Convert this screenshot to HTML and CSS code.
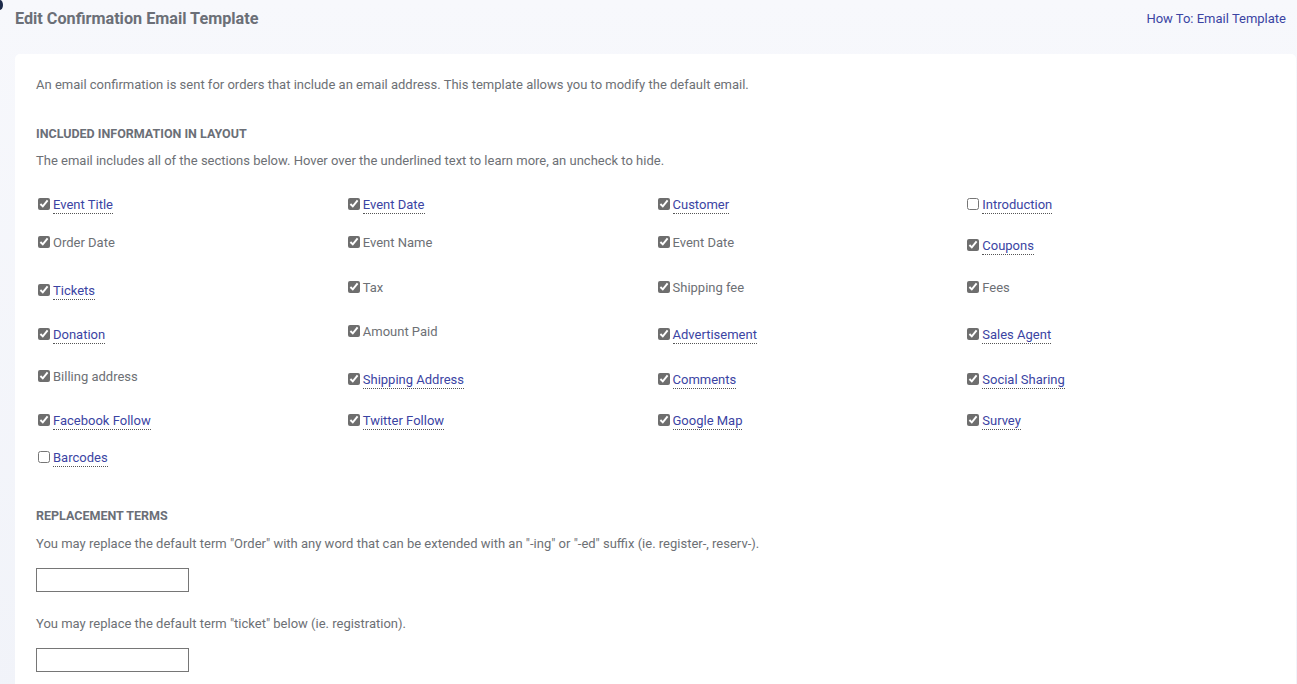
FILE: index.html
```html
<!DOCTYPE html>
<html lang="en">
<head>
    <meta charset="UTF-8">
    <meta name="viewport" content="width=device-width, initial-scale=1.0">
    <title>Edit Confirmation Email Template</title>
    <link rel="stylesheet" href="styles.css">
</head>
<body>
    <span class="corner-dot"></span>

    <div class="page-header">
        <h1>Edit Confirmation Email Template</h1>
        <a class="help-link" href="#">How To: Email Template</a>
    </div>

    <div class="card">
        <p class="intro">An email confirmation is sent for orders that include an email address. This template allows you to modify the default email.</p>

        <h2>Included Information in Layout</h2>
        <p class="note">The email includes all of the sections below. Hover over the underlined text to learn more, an uncheck to hide.</p>

        <div class="sections">
            <label class="item tip"><input type="checkbox" checked><span>Event Title</span></label>
            <label class="item tip"><input type="checkbox" checked><span>Event Date</span></label>
            <label class="item tip"><input type="checkbox" checked><span>Customer</span></label>
            <label class="item tip"><input type="checkbox"><span>Introduction</span></label>

            <label class="item"><input type="checkbox" checked><span>Order Date</span></label>
            <label class="item"><input type="checkbox" checked><span>Event Name</span></label>
            <label class="item"><input type="checkbox" checked><span>Event Date</span></label>
            <label class="item tip"><input type="checkbox" checked><span>Coupons</span></label>

            <label class="item tip"><input type="checkbox" checked><span>Tickets</span></label>
            <label class="item"><input type="checkbox" checked><span>Tax</span></label>
            <label class="item"><input type="checkbox" checked><span>Shipping fee</span></label>
            <label class="item"><input type="checkbox" checked><span>Fees</span></label>

            <label class="item tip"><input type="checkbox" checked><span>Donation</span></label>
            <label class="item"><input type="checkbox" checked><span>Amount Paid</span></label>
            <label class="item tip"><input type="checkbox" checked><span>Advertisement</span></label>
            <label class="item tip"><input type="checkbox" checked><span>Sales Agent</span></label>

            <label class="item"><input type="checkbox" checked><span>Billing address</span></label>
            <label class="item tip"><input type="checkbox" checked><span>Shipping Address</span></label>
            <label class="item tip"><input type="checkbox" checked><span>Comments</span></label>
            <label class="item tip"><input type="checkbox" checked><span>Social Sharing</span></label>

            <label class="item tip"><input type="checkbox" checked><span>Facebook Follow</span></label>
            <label class="item tip"><input type="checkbox" checked><span>Twitter Follow</span></label>
            <label class="item tip"><input type="checkbox" checked><span>Google Map</span></label>
            <label class="item tip"><input type="checkbox" checked><span>Survey</span></label>

            <label class="item tip"><input type="checkbox"><span>Barcodes</span></label>
        </div>

        <h2>Replacement Terms</h2>
        <p class="note terms">You may replace the default term "Order" with any word that can be extended with an "-ing" or "-ed" suffix (ie. register-, reserv-).</p>
        <input class="term-input" type="text">

        <p class="note terms second">You may replace the default term "ticket" below (ie. registration).</p>
        <input class="term-input" type="text">
    </div>
</body>
</html>
```

FILE: styles.css
```css
body {
    margin: 0;
    font-family: Roboto, "Liberation Sans", Arial, sans-serif;
    font-size: 13px;
    color: #6d7075;
    background: linear-gradient(180deg, #f7f8fc 0%, #f1f3f9 100%);
    min-height: 100vh;
}
.corner-dot {
    position: absolute;
    left: -3px;
    top: 0;
    width: 6px;
    height: 10px;
    border-radius: 50%;
    background: #1c2a4a;
}
.page-header {
    display: flex;
    justify-content: space-between;
    align-items: flex-start;
    height: 54px;
    padding: 0 11px 0 15px;
}
.page-header h1 {
    margin: 9px 0 0;
    font-size: 16.2px;
    line-height: 20px;
    font-weight: bold;
    color: #6b6f77;
}
.help-link {
    margin-top: 10px;
    line-height: 18px;
    color: #3b44a3;
    text-decoration: none;
}
.card {
    margin: 0 1px 0 15px;
    padding: 22px 21px 30px;
    background: #fff;
    border-radius: 5px;
    min-height: 600px;
}
.intro {
    margin: 0 0 31px;
    line-height: 18px;
}
h2 {
    margin: 0;
    font-size: 12.5px;
    line-height: 18px;
    font-weight: bold;
    text-transform: uppercase;
    color: #6b6f77;
}
.note {
    margin: 9px 0 0;
    line-height: 18px;
}
.sections {
    display: grid;
    grid-template-columns: repeat(4, 1fr);
    grid-template-rows: 41px 45px 44px 45px 41px 37px 26px;
    align-items: start;
    margin: 23px 0 35px;
}
.item {
    display: flex;
    align-items: center;
    line-height: 18px;
    cursor: pointer;
}
.item input {
    width: 12px;
    height: 12px;
    margin: 0 3px 3px 2px;
    accent-color: #6e6e6e;
}
.item.tip {
    padding-top: 4px;
}
.item.tip span {
    color: #3b44a3;
    line-height: 16px;
    border-bottom: 1px dotted #555;
}
.terms {
    margin-top: 10px;
}
.terms.second {
    margin-top: 23px;
}
.term-input {
    display: block;
    box-sizing: border-box;
    width: 153px;
    height: 24px;
    margin-top: 15px;
    border: 1px solid #767676;
    border-radius: 0;
    font: inherit;
}
```
